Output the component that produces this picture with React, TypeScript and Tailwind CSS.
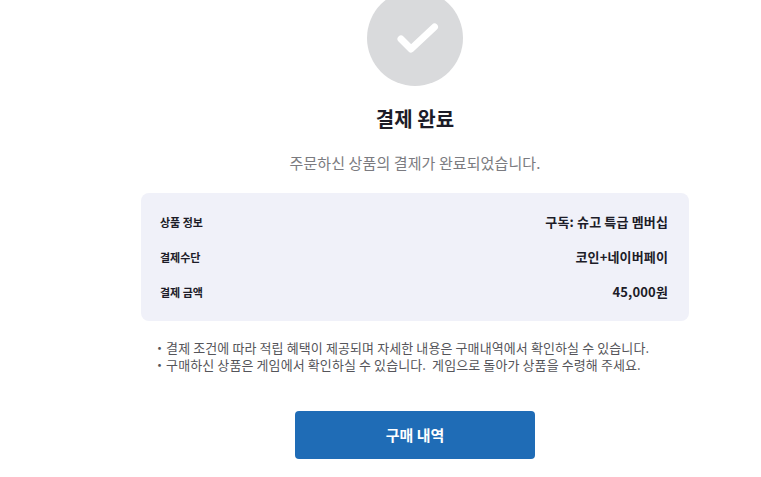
const rows = [
  ["상품 정보", "구독: 슈고 특급 멤버십"],
  ["결제수단", "코인+네이버페이"],
  ["결제 금액", "45,000원"],
];

export default function App() {
  return (
    <div className="h-[477px] w-[761px] overflow-hidden bg-white font-['Noto_Sans_CJK_KR','Noto_Sans',sans-serif]">
      <div className="ml-[141px] flex w-[548px] flex-col items-center">
        <div className="-mt-[10px] flex size-24 items-center justify-center rounded-full bg-[#d9dadc]">
          <svg viewBox="0 0 48 48" className="size-12" fill="none" stroke="#fff" strokeWidth="7" strokeLinecap="round" strokeLinejoin="round">
            <path d="M10 25l10 10L43.5 13" />
          </svg>
        </div>
        <h1 className="mt-[18px] text-[20px] leading-[30px] font-bold tracking-[0.1px] text-[#1c1c28]">결제 완료</h1>
        <p className="mt-[19px] text-[15px] leading-[20px] tracking-[0.1px] text-[#7b7b80]">주문하신 상품의 결제가 완료되었습니다.</p>
        <div className="mt-[20px] flex h-[128px] w-full flex-col justify-center gap-[15px] rounded-lg bg-[#f0f1f9] pr-[21px] pl-[19px]">
          {rows.map(([label, value]) => (
            <div key={label} className="flex h-[20px] items-center justify-between">
              <span className="text-[11px] font-bold text-[#1c1c28]">{label}</span>
              <span className="text-[13px] font-bold tracking-[0.15px] text-[#1c1c28]">{value}</span>
            </div>
          ))}
        </div>
        <ul className="mt-[18px] w-full pl-[12px] text-[13px] leading-[17px] tracking-[0.1px] text-[#55555a]">
          <li>・결제 조건에 따라 적립 혜택이 제공되며 자세한 내용은 구매내역에서 확인하실 수 있습니다.</li>
          <li>・구매하신 상품은 게임에서 확인하실 수 있습니다. &nbsp;게임으로 돌아가 상품을 수령해 주세요.</li>
        </ul>
        <button className="mt-[38px] h-[48px] w-[240px] rounded bg-[#1f6cb6] text-[15px] font-bold text-white">구매 내역</button>
      </div>
    </div>
  );
}
